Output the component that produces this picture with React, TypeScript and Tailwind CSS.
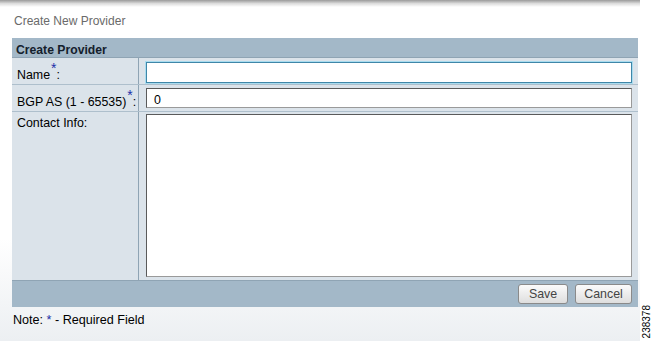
import React from 'react';

const Req = () => <sup className="text-[#1b2fa8] text-[14px] relative top-[-6px] ml-[1px]">*</sup>;

const Row: React.FC<{ label: React.ReactNode; h: string; children: React.ReactNode }> = ({ label, h, children }) => (
    <div className={`flex border-b border-[#aebfcc] ${h}`}>
        <div className="w-[127px] shrink-0 border-r border-[#8fa4b4] pl-[5px] pt-[8px] text-[12.4px] text-black">{label}</div>
        <div className="flex-1 pl-[7px] pr-[6px] pt-[3px]">{children}</div>
    </div>
);

export default function App() {
    return (
        <div className="w-[654px] h-[341px] flex bg-white overflow-hidden" style={{ fontFamily: '"Liberation Sans", Arial, sans-serif' }}>
            <div className="w-[640px] h-full flex flex-col bg-gradient-to-b from-white from-70% to-[#eceff2]">
                <div className="h-[7px] bg-gradient-to-b from-[#9a9a9a] via-[#dcdcdc] to-white" />
                <div className="pl-[14px] pt-[5px] h-[31px] text-[12px] text-[#6a6a6a]">Create New Provider</div>
                <div className="ml-[12px] w-[626px] bg-[#dbe3ea]">
                    <div className="h-[20px] bg-[#a3b8c8] pl-[4px] pt-[3px] text-[12.2px] font-bold text-[#14202c] border-b border-[#8fa4b4]">
                        Create Provider
                    </div>
                    <Row
                        h="h-[27px]"
                        label={
                            <span>
                                Name<Req />:
                            </span>
                        }
                    >
                        <div className="h-[21px] border border-[#3f86a8] shadow-[0_0_0_1px_#a9dcef] bg-white mt-[1px]" />
                    </Row>
                    <Row
                        h="h-[27px]"
                        label={
                            <span>
                                BGP AS (1 - 65535)<Req />:
                            </span>
                        }
                    >
                        <div className="h-[20px] border border-[#5a5a5a] border-r-[#9a9a9a] border-b-[#9a9a9a] bg-white text-[12.4px] pl-[7px] pt-[2px] text-black">0</div>
                    </Row>
                    <div className="flex h-[168px]">
                        <div className="w-[127px] shrink-0 border-r border-[#8fa4b4] pl-[5px] pt-[2px] text-[12.4px] text-black">Contact Info:</div>
                        <div className="flex-1 pl-[7px] pr-[6px] pt-[2px]">
                            <div className="h-[163px] border border-[#5a5a5a] border-r-[#9a9a9a] border-b-[#9a9a9a] bg-white" />
                        </div>
                    </div>
                    <div className="h-[27px] bg-[#a3b8c8] border-t border-[#8fa4b4] flex items-center justify-end gap-[7px] pr-[6px]">
                        <button className="w-[50px] h-[20px] rounded-[3px] border border-[#8a8a8a] bg-gradient-to-b from-[#fbfbfb] to-[#dedede] text-[12.4px] text-[#444]">Save</button>
                        <button className="w-[57px] h-[20px] rounded-[3px] border border-[#8a8a8a] bg-gradient-to-b from-[#fbfbfb] to-[#dedede] text-[12.4px] text-[#444]">Cancel</button>
                    </div>
                </div>
                <div className="pl-[13px] pt-[4px] text-[12.6px] text-black">
                    Note: <span className="text-[#1b2fa8]">*</span> - Required Field
                </div>
            </div>
            <div className="flex-1 flex items-end justify-center pb-[3px]">
                <div className="text-[10px] text-black [writing-mode:vertical-rl] rotate-180 leading-none">238378</div>
            </div>
        </div>
    );
}
